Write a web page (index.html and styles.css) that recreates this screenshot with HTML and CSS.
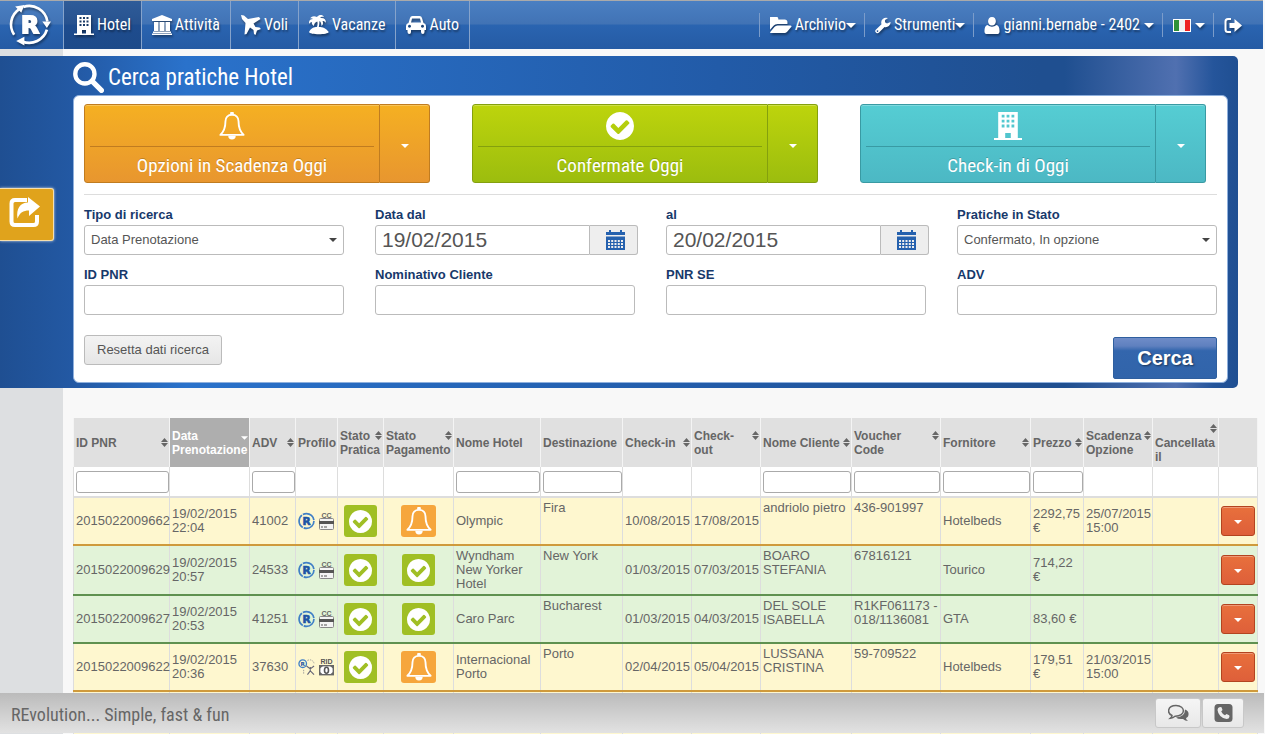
FILE: index.html
```html
<!DOCTYPE html>
<html lang="it">
<head>
<meta charset="utf-8">
<title>Cerca pratiche Hotel</title>
<link rel="stylesheet" href="styles.css">
</head>
<body>
<svg class="defs" aria-hidden="true">
  <symbol id="logo" viewBox="0 0 42 42">
    <g fill="none" stroke="currentColor" stroke-width="2.600"><path d="M6 31A18 18 0 0 1 11 6"/><path d="M15 3.800A18 18 0 0 1 38.500 18"/><path d="M38 26A18 18 0 0 1 14 37.500"/></g>
    <path fill="currentColor" d="M7 3.500l9-1.500-3 7.500zM33.500 18l8.500 0-4 6.500zM16 33v8.500l-8-4.500z"/>
    <text x="21.500" y="29" text-anchor="middle" font-family="DejaVu Sans, sans-serif" font-weight="bold" font-size="23" fill="currentColor" stroke="currentColor" stroke-width="1.800">R</text>
  </symbol>
  <symbol id="hotel" viewBox="0 0 20 20"><path fill="currentColor" fill-rule="evenodd" d="M3 0h14v18.500h3V20H0v-1.500h3zM5.500 2v2h2V2zM9 2v2h2V2zM12.500 2v2h2V2zM5.500 5.500v2h2v-2zM9 5.500v2h2v-2zM12.500 5.500v2h2v-2zM5.500 9v2h2V9zM9 9v2h2V9zM12.500 9v2h2V9zM8 15v3.500h4V15z"/></symbol>
  <symbol id="bank" viewBox="0 0 20 20"><path fill="currentColor" d="M10 0l10 4v2H0V4zM2 7h4.500v9H2zM7.500 7h5v9h-5zM13.500 7H18v9h-4.500zM1 16.500h18V18H1zM0 18.500h20V20H0z"/></symbol>
  <symbol id="plane" viewBox="0 0 20 20"><path fill="currentColor" d="M0 0l3 .5 4 3.500 11-2 1.500 2-7 4.500 2 3.500 4 .500 1.500 1.500-4 1.500L14.500 20l-1.500-1-.5-4-3.500-2.500L5.500 19l-2 .500L4.500 8 1 4z"/></symbol>
  <symbol id="island" viewBox="0 0 20 20"><path fill="currentColor" d="M0 17c2-4 5-5 8-5 .6-2 .8-4 .3-5.500C6 7 5 9 5 11c-2-1-2.500-2.500-2-4C1.500 7 .5 8 0 9c-.5-3 1-5 4-5-1-1-2-1-3-.5C3 1 5 .5 8 2c2-3 6-2.500 7 0-2-.5-3 0-4 1 4-.5 6 1 6 5-1-1.500-2-2-3.500-2 1 2 .5 4-1 5-.2-2.500-.5-4-2-5-.2 2-.2 4-.7 6 4 0 7 1 10 5-1 3-19 3-19.800 0z"/></symbol>
  <symbol id="car" viewBox="0 0 20 18"><path fill="currentColor" fill-rule="evenodd" d="M2.500 7L4 2q.5-2 2.500-2h7q2 0 2.500 2l1.500 5Q20 7.500 20 10v4h-1.500v2q0 2-1.700 2T15 16v-2H5v2q0 2-1.700 2t-1.800-2v-2H0v-4q0-2.500 2.500-3zM5 6.500h10L14 2.500H6zM3.500 8.700a1.500 1.500 0 1 0 .01 0zM16.500 8.700a1.500 1.500 0 1 0 .01 0z"/></symbol>
  <symbol id="search" viewBox="0 0 30 30"><circle cx="11.500" cy="11.500" r="9.300" fill="none" stroke="currentColor" stroke-width="4.200"/><path d="M18.500 18.500l9 9" stroke="currentColor" stroke-width="5" stroke-linecap="round"/></symbol>
  <symbol id="folder" viewBox="0 256 1856 1280"><path fill="currentColor" d="M1815 952q0 31-31 66l-336 396q-43 51-120.500 86.500t-143.500 35.500h-1088q-34 0-60.500-13t-26.500-43q0-31 31-66l336-396q43-51 120.500-86.500t143.500-35.500h1088q34 0 60.500 13t26.500 43zm-343-344v160h-832q-94 0-197 47.500t-164 119.500l-337 396-5 6q0-4-.5-12.500t-.5-12.500v-960q0-92 66-158t158-66h320q92 0 158 66t66 158v32h544q92 0 158 66t66 158z"/></symbol>
  <symbol id="wrench" viewBox="0 0 16 16"><path fill="currentColor" fill-rule="evenodd" d="M15.600 4.500A4.900 4.900 0 0 1 9.500 9.500L4 15q-1.200 1.300-2.500.500L.5 14.500q-.8-1 .3-2.300L6.500 6.700A4.900 4.900 0 0 1 13 .6L10 2.500v2.300l2 1.200zM2.500 12.700a.8.800 0 1 0 .01 0z"/></symbol>
  <symbol id="user" viewBox="0 0 16 18"><path fill="currentColor" d="M8 0c5.500 0 5.500 9 0 9S2.500 0 8 0zM3.500 8.500c2.500 2.300 6.500 2.300 9 0Q16 9 16 15q0 3-3 3H3q-3 0-3-3 0-6 3.500-6.500z"/></symbol>
  <symbol id="logout" viewBox="0 0 18 16"><path d="M7 1.500H4Q1.500 1.500 1.500 4v8q0 2.500 2.500 2.500h3" fill="none" stroke="currentColor" stroke-width="2"/><path fill="currentColor" d="M5.500 5.500h5V1.500L18 8l-7.500 6.500v-4h-5z"/></symbol>
  <symbol id="bell" viewBox="0 0 28 30"><path fill="none" stroke="currentColor" stroke-width="2" stroke-linejoin="round" d="M14 3c-4.500 0-7 3-7 7 0 7-1.500 11-5.500 14.500h25C22.500 21 21 17 21 10c0-4-2.500-7-7-7z"/><path fill="currentColor" d="M12 3V1.500a2 2 0 0 1 4 0V3zM10 25.500h8a4 4 0 0 1-8 0z"/></symbol>
  <symbol id="check" viewBox="128 128 1536 1536"><path fill="currentColor" d="M1412 734q0-28-18-46l-91-90q-19-19-45-19t-45 19l-408 407-226-226q-19-19-45-19t-45 19l-91 90q-18 18-18 46 0 27 18 45l362 362q19 19 45 19 27 0 46-19l543-543q18-18 18-45zm252 162q0 209-103 385.500t-279.500 279.500-385.500 103-385.500-103-279.500-279.500-103-385.500 103-385.500 279.500-279.500 385.500-103 385.500 103 279.500 279.500 103 385.500z"/></symbol>
  <symbol id="share" viewBox="0 0 31 31"><path fill="none" stroke="currentColor" stroke-width="4" d="M18 3H6Q2.500 3 2.500 6.500v18Q2.500 28 6 28h18.500q3.500 0 3.500-3.500V18"/><path fill="currentColor" d="M19 0l12 9.500L20 19v-5.500c-6 0-9 2-11.500 8C7 12 11 5.500 19 5.500z"/></symbol>
  <symbol id="calendar" viewBox="0 0 19 20"><path fill="currentColor" fill-rule="evenodd" d="M3 0h2v2h9V0h2v2h3v3H0V2h3zM0 6.500h19V20H0zM2 10v2h2v-2zM5.200 10v2h2v-2zM8.500 10v2h2v-2zM11.800 10v2h2v-2zM15 10v2h2v-2zM2 13v2h2v-2zM5.200 13v2h2v-2zM8.500 13v2h2v-2zM11.800 13v2h2v-2zM15 13v2h2v-2zM2 16v2h2v-2zM5.200 16v2h2v-2zM8.500 16v2h2v-2zM11.800 16v2h2v-2zM15 16v2h2v-2z"/></symbol>
  <symbol id="caret" viewBox="0 0 8 4"><path fill="currentColor" d="M0 0h8L4 4z"/></symbol>
  <symbol id="sort" viewBox="0 0 7 9"><path fill="currentColor" d="M0 4L3.500 0 7 4zM0 5h7L3.500 9z"/></symbol>
  <symbol id="mark" viewBox="0 0 16 16"><circle cx="8" cy="8" r="7" fill="none" stroke="#3f7fc6" stroke-width="1.600" stroke-dasharray="13.600 1"/><text x="8" y="11.600" text-anchor="middle" font-family="DejaVu Sans, sans-serif" font-weight="bold" font-size="10" fill="#1d55a5" stroke="#1d55a5" stroke-width=".6">R</text></symbol>
  <symbol id="card" viewBox="0 0 15 18"><text x="7.500" y="5.500" text-anchor="middle" font-family="Liberation Sans, sans-serif" font-weight="bold" font-size="7" fill="#666">CC</text><rect x=".5" y="6.500" width="14" height="11" rx="1" fill="#f4f4f4" stroke="#888"/><path fill="#555" d="M0 9h15v3H0zM2 14.500h2v1H2zM5 14.500h3v1H5z"/></symbol>
  <symbol id="cash" viewBox="0 0 15 18"><text x="7.500" y="5.500" text-anchor="middle" font-family="Liberation Sans, sans-serif" font-weight="bold" font-size="7" fill="#555">RID</text><rect x=".7" y="7.700" width="13.600" height="9" fill="#fff" stroke="#666" stroke-width="1.400"/><path fill="#666" d="M1 8h3L1 10.500zM14 8h-3l3 2.500zM1 16.500h3L1 14zM14 16.500h-3l3-2.500z"/><ellipse cx="7.500" cy="12.200" rx="2" ry="3" fill="#fff" stroke="#555" stroke-width="1.600"/></symbol>
  <symbol id="agent" viewBox="0 0 18 18"><circle cx="5" cy="5.500" r="4" fill="none" stroke="#3f7fc6" stroke-width="1.400"/><text x="5" y="8" text-anchor="middle" font-family="DejaVu Sans, sans-serif" font-weight="bold" font-size="6" fill="#1d55a5">R</text><path d="M10 2q5-2 7 3M6 12v5" fill="none" stroke="#999" stroke-dasharray="1.500 1"/><path d="M9 8l4 3 4-3M13 9v4l-3 4M13 13l4 4" fill="none" stroke="#667" stroke-width="1.200"/></symbol>
  <symbol id="chat" viewBox="0 0 21 17"><path fill="currentColor" d="M17 5q5 2 3 7-1 1-2 1.500 0 1.500 2 3-3 0-5-2-5 .5-7-1.500 9-.5 9-8z"/><path fill="#eee" stroke="currentColor" stroke-width="1.500" d="M8 1C-1 1-1 9 4 11q0 1.500-1.500 2.700Q5 13.500 7 11.800C18 12 18 1 8 1z"/></symbol>
  <symbol id="phone" viewBox="0 0 18 18"><rect width="18" height="18" rx="3.500" fill="currentColor"/><path fill="#eee" d="M5.500 3l1.500.3L8 6 6.700 7.500q1.300 2.700 3.800 3.800L12 10l2.700 1.200.3 1.500q-.5 2.300-2.800 2.300Q4 13.500 3 6 3 3.500 5.500 3z"/></symbol>
</svg>

<header class="topbar">
  <a class="brand" href="#" aria-label="REvolution"><svg><use href="#logo"/></svg></a>
  <nav class="menu">
    <a class="active" href="#"><svg><use href="#hotel"/></svg>Hotel</a>
    <a href="#"><svg><use href="#bank"/></svg>Attività</a>
    <a href="#"><svg><use href="#plane"/></svg>Voli</a>
    <a href="#"><svg><use href="#island"/></svg>Vacanze</a>
    <a href="#"><svg><use href="#car"/></svg>Auto</a>
  </nav>
  <nav class="tools">
    <a href="#"><svg class="wide"><use href="#folder"/></svg>Archivio<svg class="drop"><use href="#caret"/></svg></a>
    <a href="#"><svg><use href="#wrench"/></svg>Strumenti<svg class="drop"><use href="#caret"/></svg></a>
    <a href="#"><svg><use href="#user"/></svg>gianni.bernabe - 2402<svg class="drop after"><use href="#caret"/></svg></a>
    <a href="#" aria-label="Lingua"><span class="flag"></span><svg class="drop after"><use href="#caret"/></svg></a>
    <a href="#" aria-label="Esci"><svg class="exit"><use href="#logout"/></svg></a>
  </nav>
</header>

<button class="share" aria-label="Condividi"><svg><use href="#share"/></svg></button>

<main class="page">
  <section class="finder">
    <h1><svg><use href="#search"/></svg>Cerca pratiche Hotel</h1>
    <form class="panel">
      <div class="shortcuts">
        <div class="split orange"><button type="button" class="main"><span class="pic"><svg><use href="#bell"/></svg></span><span class="cap">Opzioni in Scadenza Oggi</span></button><button type="button" class="more" aria-label="Altro"><svg><use href="#caret"/></svg></button></div>
        <div class="split green"><button type="button" class="main"><span class="pic"><svg><use href="#check"/></svg></span><span class="cap">Confermate Oggi</span></button><button type="button" class="more" aria-label="Altro"><svg><use href="#caret"/></svg></button></div>
        <div class="split teal"><button type="button" class="main"><span class="pic"><svg><use href="#hotel"/></svg></span><span class="cap">Check-in di Oggi</span></button><button type="button" class="more" aria-label="Altro"><svg><use href="#caret"/></svg></button></div>
      </div>
      <div class="fields">
        <div class="field"><label for="tipo">Tipo di ricerca</label><div class="pick"><select id="tipo"><option>Data Prenotazione</option></select><svg><use href="#caret"/></svg></div></div>
        <div class="field"><label for="dal">Data dal</label><div class="date"><input id="dal" type="text" value="19/02/2015"><button type="button" aria-label="Calendario"><svg><use href="#calendar"/></svg></button></div></div>
        <div class="field"><label for="al">al</label><div class="date"><input id="al" type="text" value="20/02/2015"><button type="button" aria-label="Calendario"><svg><use href="#calendar"/></svg></button></div></div>
        <div class="field"><label for="stato">Pratiche in Stato</label><div class="pick"><select id="stato"><option>Confermato, In opzione</option></select><svg><use href="#caret"/></svg></div></div>
        <div class="field"><label for="pnr">ID PNR</label><input id="pnr" type="text"></div>
        <div class="field"><label for="nome">Nominativo Cliente</label><input id="nome" type="text"></div>
        <div class="field"><label for="se">PNR SE</label><input id="se" type="text"></div>
        <div class="field"><label for="adv">ADV</label><input id="adv" type="text"></div>
      </div>
      <div class="actions"><button type="reset" class="reset">Resetta dati ricerca</button><button type="submit" class="submit">Cerca</button></div>
    </form>
  </section>

  <table class="list">
    <colgroup><col class="w96"><col class="w80"><col class="w46"><col class="w42"><col class="w46"><col class="w70"><col class="w87"><col class="w82"><col class="w69"><col class="w69"><col class="w91"><col class="w89"><col class="w90"><col class="w53"><col class="w69"><col class="w66"><col class="w39"></colgroup>
    <thead>
      <tr>
        <th><svg><use href="#sort"/></svg>ID PNR</th>
        <th class="sorted"><svg><use href="#caret"/></svg>Data Prenotazione</th>
        <th><svg><use href="#sort"/></svg>ADV</th>
        <th>Profilo</th>
        <th><svg><use href="#sort"/></svg>Stato Pratica</th>
        <th><svg><use href="#sort"/></svg>Stato Pagamento</th>
        <th>Nome Hotel</th>
        <th>Destinazione</th>
        <th><svg><use href="#sort"/></svg>Check-in</th>
        <th><svg><use href="#sort"/></svg>Check-<br>out</th>
        <th><svg><use href="#sort"/></svg>Nome Cliente</th>
        <th><svg><use href="#sort"/></svg>Voucher Code</th>
        <th><svg><use href="#sort"/></svg>Fornitore</th>
        <th><svg><use href="#sort"/></svg>Prezzo</th>
        <th><svg><use href="#sort"/></svg>Scadenza Opzione</th>
        <th><svg><use href="#sort"/></svg><br>Cancellata il</th>
        <th></th>
      </tr>
      <tr class="filters">
        <td><input type="text" aria-label="Filtro ID PNR"></td><td></td><td><input type="text" aria-label="Filtro ADV"></td><td></td><td></td><td></td>
        <td><input type="text" aria-label="Filtro Nome Hotel"></td><td><input type="text" aria-label="Filtro Destinazione"></td><td></td><td></td>
        <td><input type="text" aria-label="Filtro Nome Cliente"></td><td><input type="text" aria-label="Filtro Voucher"></td><td><input type="text" aria-label="Filtro Fornitore"></td><td><input type="text" aria-label="Filtro Prezzo"></td><td></td><td></td><td></td>
      </tr>
    </thead>
    <tbody>
      <tr class="pending"><td>2015022009662</td><td>19/02/2015 22:04</td><td>41002</td><td><span class="marks"><svg><use href="#mark"/></svg><svg><use href="#card"/></svg></span></td><td class="mid"><span class="ok"><svg><use href="#check"/></svg></span></td><td class="mid"><span class="due"><svg><use href="#bell"/></svg></span></td><td>Olympic</td><td class="top">Fira</td><td>10/08/2015</td><td>17/08/2015</td><td class="top">andriolo pietro</td><td class="top">436-901997</td><td>Hotelbeds</td><td>2292,75 €</td><td>25/07/2015 15:00</td><td></td><td><button class="act" aria-label="Azioni"><svg><use href="#caret"/></svg></button></td></tr>
      <tr class="done"><td>2015022009629</td><td>19/02/2015 20:57</td><td>24533</td><td><span class="marks"><svg><use href="#mark"/></svg><svg><use href="#card"/></svg></span></td><td class="mid"><span class="ok"><svg><use href="#check"/></svg></span></td><td class="mid"><span class="ok"><svg><use href="#check"/></svg></span></td><td>Wyndham New Yorker Hotel</td><td class="top">New York</td><td>01/03/2015</td><td>07/03/2015</td><td class="top">BOARO STEFANIA</td><td class="top">67816121</td><td>Tourico</td><td>714,22 €</td><td></td><td></td><td><button class="act" aria-label="Azioni"><svg><use href="#caret"/></svg></button></td></tr>
      <tr class="done"><td>2015022009627</td><td>19/02/2015 20:53</td><td>41251</td><td><span class="marks"><svg><use href="#mark"/></svg><svg><use href="#card"/></svg></span></td><td class="mid"><span class="ok"><svg><use href="#check"/></svg></span></td><td class="mid"><span class="ok"><svg><use href="#check"/></svg></span></td><td>Caro Parc</td><td class="top">Bucharest</td><td>01/03/2015</td><td>04/03/2015</td><td class="top">DEL SOLE ISABELLA</td><td class="top">R1KF061173 - 018/1136081</td><td>GTA</td><td>83,60 €</td><td></td><td></td><td><button class="act" aria-label="Azioni"><svg><use href="#caret"/></svg></button></td></tr>
      <tr class="pending"><td>2015022009622</td><td>19/02/2015 20:36</td><td>37630</td><td><span class="marks"><svg><use href="#agent"/></svg><svg><use href="#cash"/></svg></span></td><td class="mid"><span class="ok"><svg><use href="#check"/></svg></span></td><td class="mid"><span class="due"><svg><use href="#bell"/></svg></span></td><td>Internacional Porto</td><td class="top">Porto</td><td>02/04/2015</td><td>05/04/2015</td><td class="top">LUSSANA CRISTINA</td><td class="top">59-709522</td><td>Hotelbeds</td><td>179,51 €</td><td>21/03/2015 15:00</td><td></td><td><button class="act" aria-label="Azioni"><svg><use href="#caret"/></svg></button></td></tr>
      <tr class="pending"><td></td><td></td><td></td><td></td><td></td><td></td><td></td><td></td><td></td><td></td><td></td><td></td><td></td><td></td><td></td><td></td><td></td></tr>
    </tbody>
  </table>
</main>

<footer class="bottombar">
  <span>REvolution... Simple, fast &amp; fun</span>
  <div class="contact"><button aria-label="Chat"><svg><use href="#chat"/></svg></button><button aria-label="Telefono"><svg><use href="#phone"/></svg></button></div>
</footer>
</body>
</html>
```

FILE: styles.css
```css
* { box-sizing: border-box; }
html { scrollbar-width: none; overflow-x: hidden; }
body {
  margin: 0;
  min-height: 100vh;
  font: 13px/14px "Liberation Sans", Arial, sans-serif;
  color: #666;
  background: linear-gradient(90deg, #dddfe1 63px, #f8f8f8 63px);
}
button, input, select { font: inherit; color: inherit; margin: 0; padding: 0; }
button { cursor: pointer; }
a { color: inherit; text-decoration: none; }
.defs { display: none; }

.topbar {
  display: flex;
  height: 49px;
  margin-right: 2px;
  border-top: 1px solid #aaa;
  background: linear-gradient(#4a7fc2, #4173b5 48%, #2a64b0 50%, #255ba4);
  color: #fff;
  font: 16px/24px "Roboto Condensed", "Liberation Sans Narrow", "Liberation Sans", sans-serif;
}
.menu, .tools { text-shadow: 1px 2px 2px rgba(0, 0, 0, .4); }
.topbar svg { filter: drop-shadow(1px 2px 1px rgba(0, 0, 0, .4)); }
.brand { width: 64px; padding: 2px 8px; border-right: 1px solid #86a3cb; }
.brand svg { width: 43px; height: 43px; }
.menu { display: flex; }
.menu a { display: flex; align-items: center; gap: 3px; padding: 0 10px; border-right: 1px solid #86a3cb; }
.menu .active { background: linear-gradient(#2f5c99, #27528f 48%, #1e4c8e 50%, #1d4a89); }
.menu svg { width: 20px; height: 20px; }
.tools { display: flex; align-items: center; margin-left: auto; padding-right: 13px; }
.tools a { display: flex; align-items: center; height: 24px; padding: 0 8px 0 10px; border-left: 1px solid #7b9cca; }
.tools svg { width: 16px; height: 17px; margin-right: 3px; }
.tools .wide { width: 22px; }
.tools .drop { width: 10px; height: 5px; margin-right: 0; }
.tools .after { margin-left: 4px; }
.tools .exit { width: 18px; margin-right: 0; }
.flag { width: 18px; height: 13px; border: 1px solid #fff; background: linear-gradient(90deg, #2f9238 33%, #f2f2f2 33% 67%, #e22 67%); }

.share {
  position: absolute;
  left: 0;
  top: 188px;
  width: 54px;
  height: 53px;
  display: flex;
  align-items: center;
  justify-content: center;
  background: #e0a31c;
  color: #fff;
  border: 1px solid #f5dfae;
  border-left: 0;
  border-radius: 0 3px 3px 0;
  box-shadow: 0 0 3px rgba(255, 255, 255, .8);
  padding: 0 4px 4px 0;
}
.share svg { width: 31px; height: 31px; }

.page { padding: 7px 8px 0 0; }
.finder {
  margin-right: 19px;
  padding: 4px 10px 5px 73px;
  border-radius: 0 5px 5px 0;
  background: linear-gradient(90deg, #1f4f92, #2359a4 6%, #2a72cb 15%, #225ba8 58%, #1f4f90 84%, #1f4f90 86%, #5070b0 95%, #25559b 98%, #1f4f92);
}
.finder h1 {
  display: flex;
  align-items: center;
  gap: 4px;
  margin: 0;
  height: 35px;
  color: #fff;
  font: 23px/36px "Roboto Condensed", "Liberation Sans Narrow", "Liberation Sans", sans-serif;
}
.finder h1 svg { width: 31px; height: 31px; }
.panel { background: #fff; border: 1px solid #8fb0dd; border-radius: 6px; padding: 8px 10px 3px; }
.shortcuts { display: grid; grid-template-columns: repeat(3, 1fr); gap: 42px; padding-right: 11px; }
.split { display: flex; height: 79px; color: #fff; }
.split button { color: #fff; border: 1px solid var(--line); background: linear-gradient(var(--from), var(--to)); box-shadow: inset 0 1px rgba(255, 255, 255, .25); }
.split .main { flex: 1; display: flex; flex-direction: column; padding: 0 5px; border-radius: 3px 0 0 3px; }
.split .more { width: 50px; border-left: 0; border-radius: 0 3px 3px 0; }
.split .more svg { width: 8px; height: 4px; }
.pic { display: flex; align-items: center; justify-content: center; width: 100%; height: 42px; border-bottom: 1px solid var(--line); }
.pic svg { width: 28px; height: 28px; }
.cap { width: 100%; padding-top: 3px; font: 19px/32px "Roboto Condensed", "Liberation Sans Narrow", "Liberation Sans", sans-serif; text-shadow: 0 -1px rgba(0, 0, 0, .2); }
.orange { --from: #f5b022; --to: #e8962f; --line: #c07c20; }
.green { --from: #bdd40c; --to: #9cbd0e; --line: #84a00e; }
.teal { --from: #55cdd3; --to: #4cb8c4; --line: #399aa3; }

.fields { display: grid; grid-template-columns: repeat(4, 1fr); gap: 4px 31px; margin-top: 11px; padding-top: 10px; border-top: 1px solid #ddd; }
.field { display: flex; flex-direction: column; height: 56px; }
.field label { height: 20px; line-height: 20px; font-weight: bold; color: #17396b; }
.field input, .pick select { width: 100%; height: 30px; border: 1px solid #bbb; border-radius: 3px; background: #fff; color: #555; padding: 0 6px; }
.pick { display: grid; align-items: center; }
.pick select { grid-area: 1 / 1; appearance: none; }
.pick svg { grid-area: 1 / 1; justify-self: end; width: 8px; height: 4px; margin-right: 7px; color: #444; pointer-events: none; }
.date { display: flex; margin-right: -3px; }
.field .date input { flex: 1; min-width: 0; border-radius: 3px 0 0 3px; font-size: 21px; padding: 0 6px; }
.date button { display: flex; align-items: center; justify-content: center; width: 48px; height: 30px; padding-left: 4px; border: 1px solid #bbb; border-left: 0; border-radius: 0 3px 3px 0; background: #eee; color: #2561ae; }
.date svg { width: 19px; height: 20px; }
.actions { display: flex; justify-content: space-between; margin-top: 14px; }
.reset { align-self: flex-start; height: 30px; padding: 0 12px; border: 1px solid #bbb; border-radius: 3px; background: linear-gradient(#f3f3f3, #e6e6e6); color: #555; }
.submit { width: 104px; height: 42px; margin-top: 2px; border: 1px solid #2f5f9f; border-radius: 2px; background: linear-gradient(#6f8cc8, #5f80bf 20%, #3366ad 32%, #3164aa); color: #fff; font-size: 20px; font-weight: bold; text-shadow: 1px 1px 2px rgba(0, 0, 0, .5); }

.list { width: calc(100% - 73px); margin: 30px 0 0 73px; border-collapse: collapse; table-layout: fixed; background: #fff; }
.w96 { width: 96px; } .w80 { width: 80px; } .w46 { width: 46px; } .w42 { width: 42px; } .w70 { width: 70px; } .w87 { width: 87px; } .w82 { width: 82px; } .w69 { width: 69px; } .w91 { width: 91px; } .w89 { width: 89px; } .w90 { width: 90px; } .w53 { width: 53px; } .w66 { width: 66px; } .w39 { width: 39px; }
.list th { height: 49px; padding: 0 0 0 2px; border: solid #f4f4f4; border-width: 0 1px; background: #e0e0e0; text-align: left; vertical-align: middle; font-size: 12px; color: #666; }
.list th svg { float: right; width: 7px; height: 9px; margin: 2px 1px 0 0; }
.list .sorted { background: #aeaeae; color: #fff; }
.list .sorted svg { height: 4px; margin-top: 7px; }
.list td { height: 48px; padding: 3px 0 3px 2px; border: 1px solid #ddd; }
.list .filters td { height: 30px; padding: 4px 0 3px 2px; border-top: 0; border-bottom: 2px solid #ddd; }
.filters input { display: block; width: 100%; height: 22px; border: 1px solid #aaa; border-radius: 3px; background: #fff; }
.pending { background: #fef7cf; }
.done { background: #e2f3d8; }
.list .pending td { border-bottom: 2px solid #cf9a3c; }
.list .done td { border-bottom: 2px solid #5f9150; }
.list td.top { vertical-align: top; }
.list td.mid { text-align: center; padding-left: 0; }
.marks { display: flex; gap: 3px; align-items: center; }
.marks svg { width: 17px; height: 18px; }
.ok, .due { display: inline-flex; align-items: center; justify-content: center; vertical-align: middle; width: 33px; height: 32px; border-radius: 3px; color: #fff; background: #a0bf24; }
.due { width: 35px; background: #f6a63c; }
.ok svg { width: 23px; height: 23px; }
.due svg { width: 26px; height: 28px; }
.act { display: block; width: 34px; height: 30px; border: 1px solid #b34420; border-radius: 3px; background: linear-gradient(#e8703c, #de5f3a); color: #fff; box-shadow: inset 0 1px rgba(255, 255, 255, .3); }
.act svg { width: 8px; height: 4px; vertical-align: middle; }

.bottombar {
  position: fixed;
  left: 0;
  right: 1px;
  bottom: 1px;
  height: 40px;
  display: flex;
  align-items: center;
  justify-content: space-between;
  padding: 0 20px 0 11px;
  background: linear-gradient(#bbb, #e2e2e2);
  font: 18px/24px "Roboto Condensed", "Liberation Sans Narrow", "Liberation Sans", sans-serif;
}
.bottombar span { padding-top: 4px; }
.contact { display: flex; gap: 1px; }
.contact button { display: flex; align-items: center; justify-content: center; width: 46px; height: 30px; border: 1px solid #c8c8c8; border-radius: 3px; background: linear-gradient(#f5f5f5, #e8e8e8); color: #666; }
.contact button + button { width: 42px; }
.contact svg { width: 21px; height: 18px; }
```
